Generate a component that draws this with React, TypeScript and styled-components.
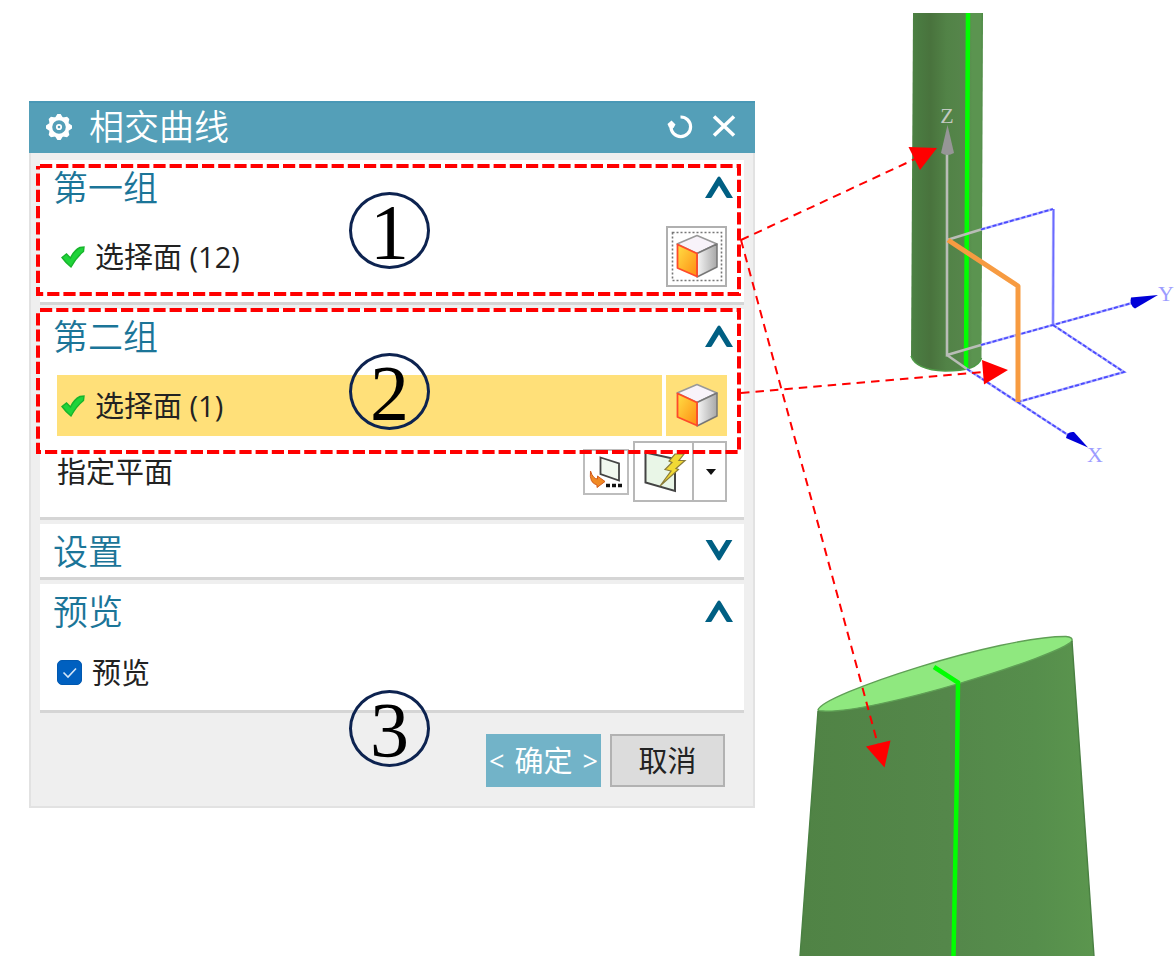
import React, { useState } from 'react';
import styled, { createGlobalStyle } from 'styled-components';

const GlobalStyle = createGlobalStyle`
  *, *::before, *::after { box-sizing: border-box; }
  body {
    margin: 0;
    background: #fff;
    color: #222;
    font-family: "Open Sans", "Noto Sans CJK SC", sans-serif;
  }
  button { font: inherit; color: inherit; padding: 0; border: 0; background: none; }
  svg { display: block; }
`;

const Page = styled.main`
  display: flex;
  align-items: flex-start;
  padding-left: 29px;
  overflow-x: hidden;
`;

const Dialog = styled.section`
  flex: 1;
  min-width: 0;
  margin-top: 101px;
`;

const TitleBar = styled.header`
  display: flex;
  align-items: center;
  height: 52px;
  padding: 0 18px 0 16px;
  background: #549fb8;
  box-shadow: inset 0 2px 0 #4998b6;
  color: #fff;
`;

const DialogTitle = styled.h1`
  flex: 1;
  margin: 0 0 0 16px;
  font-size: 35px;
  line-height: 48px;
  font-weight: 350;
`;

const BarButtons = styled.div`
  display: flex;
  gap: 18px;
`;

const BarButton = styled.button`
  width: 26px;
  height: 26px;
`;

const Body = styled.div`
  display: flex;
  flex-direction: column;
  gap: 4px;
  padding: 7px 9px 0;
  background: #efefef;
  border: 2px solid #e2e2e2;
  border-top: 0;
`;

const Panel = styled.section<{ $closed?: boolean }>`
  position: relative;
  padding: 0 17px ${(p) => (p.$closed ? 0 : 15)}px;
  background: #fff;
  border-bottom: 3px solid #d5d5d5;
`;

const PanelHead = styled.div`
  display: flex;
  align-items: center;
  justify-content: space-between;
  height: 53px;
  margin: 0 -6px 0 -4px;
`;

const PanelTitle = styled.h2`
  margin: 0;
  padding-top: 3px;
  color: #1b7598;
  font-size: 35px;
  line-height: 50px;
  font-weight: 350;
`;

const Row = styled.div<{ $gap: number; $height?: number }>`
  display: flex;
  align-items: center;
  gap: 4px;
  height: ${(p) => p.$height ?? 61}px;
  margin-top: ${(p) => p.$gap}px;
  font-size: 29px;
  line-height: 40px;
`;

const Field = styled.div<{ $active?: boolean }>`
  flex: 1;
  display: flex;
  align-items: center;
  gap: 10px;
  height: 100%;
  padding-left: 4px;
  background: ${(p) => (p.$active ? '#ffe079' : 'transparent')};
`;

const RowLabel = styled.span`
  flex: 1;
`;

const FaceButton = styled.button<{ $active?: boolean }>`
  width: 61px;
  height: 61px;
  background: ${(p) => (p.$active ? '#ffe079' : '#fff')};
  box-shadow: ${(p) => (p.$active ? 'none' : 'inset 0 0 0 2px #b0b0b0')};
`;

const ToolButton = styled.button`
  width: 46px;
  height: 46px;
  box-shadow: inset 0 0 0 2px #bdbdbd;
`;

const SplitButton = styled.div`
  display: flex;
  height: 61px;
  box-shadow: inset 0 0 0 2px #b8b8b8;
`;

const SplitMain = styled.button`
  width: 61px;
  border-right: 2px solid #b8b8b8;
`;

const SplitArrow = styled.button`
  display: flex;
  align-items: center;
  justify-content: center;
  width: 33px;
`;

const CheckLabel = styled.label`
  display: flex;
  align-items: center;
  gap: 10px;
`;

const CheckHolder = styled.span`
  position: relative;
  width: 25px;
  height: 25px;

  svg {
    position: absolute;
    inset: 0;
    pointer-events: none;
  }
`;

const CheckInput = styled.input`
  appearance: none;
  display: block;
  width: 25px;
  height: 25px;
  margin: 0;
  border: 1px solid #0058b0;
  border-radius: 5px;
  background: #fff;

  &:checked { background: #0060c0; }
`;

const Footer = styled.footer`
  display: flex;
  justify-content: flex-end;
  gap: 9px;
  padding: 17px 19px 19px 0;
`;

const ActionButton = styled.button<{ $primary?: boolean }>`
  width: 115px;
  height: 53px;
  font-size: 29px;
  line-height: 40px;
  white-space: nowrap;
  color: ${(p) => (p.$primary ? '#fff' : '#222')};
  background: ${(p) => (p.$primary ? '#72b3c8' : '#dcdcdc')};
  box-shadow: ${(p) => (p.$primary ? 'none' : 'inset 0 0 0 2px #b2b2b2')};
`;

const Arrowed = styled.span`
  display: flex;
  align-items: center;
  justify-content: space-between;
  padding: 0 3px;

  small { font-size: 27px; }
`;

const Outline = styled.svg<{ $top: number; $bottom: number }>`
  position: absolute;
  top: ${(p) => p.$top}px;
  left: -2px;
  width: calc(100% - 3px);
  height: calc(100% - ${(p) => p.$top + p.$bottom}px);
  overflow: visible;
  pointer-events: none;
`;

const StepMark = styled.div<{ $top: number }>`
  position: absolute;
  z-index: 2;
  top: ${(p) => p.$top}px;
  left: calc(50% - 43px);
  width: 81px;
  height: 77px;
  border: 3px solid #0d2350;
  border-radius: 50%;
  color: #000;
  font-family: "Liberation Serif", serif;
  font-size: 78px;
  line-height: 73px;
  text-align: center;
  pointer-events: none;
`;

const Scene = styled.svg`
  position: relative;
  flex: none;
  overflow: visible;
  pointer-events: none;
  font-family: "Liberation Serif", serif;
  font-size: 22px;
`;

const GearIcon = () => (
  <svg width="28" height="28" viewBox="-14 -14 28 28" fill="none" stroke="#fff">
    <circle r="8.6" strokeWidth="3.6" />
    <circle r="2.2" strokeWidth="1.8" />
    {[0, 45, 90, 135, 180, 225, 270, 315].map((a) => (
      <path key={a} d="M-4 -9.3 L-1.6 -13 H1.6 L4 -9.3Z" fill="#fff" stroke="none" transform={`rotate(${a})`} />
    ))}
  </svg>
);

const ResetIcon = () => (
  <svg width="26" height="26" viewBox="0 0 26 26" fill="none" stroke="#fff" strokeWidth="3.2">
    <path d="M13.5 3 A9.800 9.800 0 1 1 4 12.500" />
    <path d="M0.500 10 L4.500 6.500 L8.500 10.500 L6.500 14 L2 13.500Z" fill="#fff" stroke="none" />
  </svg>
);

const CloseIcon = () => (
  <svg width="26" height="26" viewBox="0 0 26 26" fill="none" stroke="#fff" strokeWidth="3.6">
    <path d="M3 2.500 L23 21.500 M23 2.500 L3 21.500" />
  </svg>
);

const Chevron = ({ down }: { down?: boolean }) => (
  <svg width="28" height="22" viewBox="0 0 28 22" fill="#005f83">
    <path
      d="M0 22 L12.500 1.500 Q14 -0.500 15.500 1.500 L28 22 H22.800 Q21.500 22 20.800 20.500 L14 9.500 L7.200 20.500 Q6.500 22 5.200 22Z"
      transform={down ? 'matrix(1 0 0 -1 0 21)' : undefined}
    />
  </svg>
);

const DoneIcon = () => (
  <svg width="24" height="24" viewBox="0 0 24 24">
    <path
      d="M1 12.500 L5.500 9 L9.500 13 Q13 5.500 19 2.500 L23 2 L22.500 6.500 Q15.500 12 10 22 Q5 18 1 12.500Z"
      fill="#1fd43a"
      stroke="#18b42c"
      strokeWidth="1.4"
    />
  </svg>
);

const CubeIcon = ({ focused }: { focused?: boolean }) => (
  <svg width="61" height="61" viewBox="0 0 61 61">
    <defs>
      <linearGradient id="cubeFront" x1="0" y1="0" x2="1" y2="1">
        <stop offset="0" stopColor="#ffdf45" />
        <stop offset="1" stopColor="#ff8c12" />
      </linearGradient>
      <linearGradient id="cubeSide" x1="0" y1="0" x2="1" y2="0">
        <stop offset="0" stopColor="#f6f6f6" />
        <stop offset="1" stopColor="#a8a8a8" />
      </linearGradient>
    </defs>
    {focused && (
      <rect x="6.5" y="6.5" width="49" height="48" fill="none" stroke="#777" strokeWidth="1.6" strokeDasharray="2 2" />
    )}
    <path d="M31 9.500 L51 18 L31 27.500 L11 18Z" fill="#f8f3fa" stroke="#999" strokeWidth="1.5" strokeLinejoin="round" />
    <path d="M31 27.500 L51 18 V41 L31 51Z" fill="url(#cubeSide)" stroke="#777" strokeWidth="1.5" strokeLinejoin="round" />
    <path d="M31 27.500 V50.500 L11.500 42 V18.500Z" fill="url(#cubeFront)" stroke="#ff4a2a" strokeWidth="1.8" strokeLinejoin="round" />
  </svg>
);

const PlaneDialogIcon = () => (
  <svg width="46" height="46" viewBox="0 0 46 46">
    <path d="M17.500 8.500 L36 14.500 V31.500 L17.500 25Z" fill="#f1f8ef" stroke="#444" strokeWidth="1.8" />
    <path d="M7.500 22 Q6 34 14 36 V38.500 L22 32.500 L14.500 27 V30 Q10 30 7.500 22Z" fill="#f08a24" stroke="#d35a1c" strokeWidth="1" />
    <path d="M23 36.500 h4 m2 0 h4 m2 0 h4" stroke="#111" strokeWidth="3.4" />
  </svg>
);

const InferredPlaneIcon = () => (
  <svg width="60" height="61" viewBox="0 0 60 61">
    <path d="M12.500 11.500 L42 18 V50 L12.500 41.500Z" fill="#e9f6e7" stroke="#444" strokeWidth="2" />
    <path
      d="M42 13 H51 L46 19.500 H52 L43 27.500 L45.500 28.500 L27 45 L38 30 L32 28.500 L39 21.500 L36 20Z"
      fill="#f1d935"
      stroke="#8a7c3a"
      strokeWidth="1.2"
    />
  </svg>
);

const RedOutline = ({ top, bottom }: { top: number; bottom: number }) => (
  <Outline $top={top} $bottom={bottom} aria-hidden="true">
    <rect width="100%" height="100%" fill="none" stroke="#f00" strokeWidth="4" strokeDasharray="12.2 4" strokeDashoffset="-2" />
  </Outline>
);

type GroupProps = { title: string; closed?: boolean; children?: React.ReactNode };

const Group = ({ title, closed, children }: GroupProps) => (
  <Panel $closed={closed}>
    <PanelHead>
      <PanelTitle>{title}</PanelTitle>
      <button type="button" aria-label={title} aria-expanded={!closed}>
        <Chevron down={closed} />
      </button>
    </PanelHead>
    {children}
  </Panel>
);

const SelectRow = ({ label, active }: { label: string; active?: boolean }) => (
  <Row $gap={13}>
    <Field $active={active}>
      <DoneIcon />
      <span>{label}</span>
    </Field>
    <FaceButton type="button" aria-label={label} $active={active}>
      <CubeIcon focused={!active} />
    </FaceButton>
  </Row>
);

const ModelScene = () => (
  <Scene width="419" height="956" viewBox="755 0 419 956" role="img" aria-label="模型">
    <defs>
      <linearGradient id="rod" x1="0" y1="0" x2="1" y2="0">
        <stop offset="0" stopColor="#4c8243" />
        <stop offset="0.1" stopColor="#4a7b41" />
        <stop offset="0.27" stopColor="#49733d" />
        <stop offset="0.5" stopColor="#528347" />
        <stop offset="0.75" stopColor="#56854b" />
        <stop offset="0.85" stopColor="#5b9450" />
        <stop offset="0.97" stopColor="#5b9450" />
        <stop offset="1" stopColor="#4a8842" />
      </linearGradient>
      <linearGradient id="blade" x1="0" y1="0" x2="1" y2="0">
        <stop offset="0" stopColor="#508345" />
        <stop offset="0.5" stopColor="#54874a" />
        <stop offset="0.8" stopColor="#568e4c" />
        <stop offset="1" stopColor="#5b964e" />
      </linearGradient>
    </defs>

    <path d="M913 13 H983 L981.5 358 Q978 371 945 371 Q916 370 911 356Z" fill="url(#rod)" />
    <path d="M911 356 Q916 370 945 371 Q978 371 981.5 358" fill="none" stroke="#4f9a47" strokeWidth="1.5" />
    <path d="M968 13 L966 369" stroke="#0f0" strokeWidth="4.5" />

    <g fill="none" stroke="#b9bdb7" strokeWidth="2.6">
      <path d="M947 152 V355 L981 345" />
      <path d="M947 355 L967 369" />
      <path d="M947 240 L981 229.500" />
    </g>
    <path d="M947.500 125 L954 153 Q947 157 941 153Z" fill="#969696" />
    <g fill="none" stroke="#b4b4ff" strokeWidth="2.6">
      <path d="M981 229.500 L1053 209" />
      <path d="M1053.500 209 L1053 325" strokeWidth="3" />
      <path d="M981 345 L1132 303" />
      <path d="M967 369 L1068 435" />
      <path d="M1053 325 L1124 372 L1018 402" />
    </g>
    <g fill="none" stroke="#4a4aff" strokeWidth="1.8" strokeDasharray="4 2">
      <path d="M981 229.500 L1053 209" />
      <path d="M981 345 L1132 303" />
      <path d="M967 369 L1068 435" />
      <path d="M1053 325 L1124 372 L1018 402" />
    </g>
    <path d="M1053.500 209 L1053 325" stroke="#6a6aff" strokeWidth="1.4" />
    <path d="M1131 297.500 L1158 295 L1135 308.500 Q1129 305 1131 297.500Z" fill="#0000d8" />
    <path d="M1066 438 Q1067 431 1074 432 L1088 447.500Z" fill="#0000d8" />
    <path d="M948 240 L1018 286 V402" fill="none" stroke="#f79b41" strokeWidth="5" strokeLinejoin="round" />
    <g textAnchor="middle">
      <text x="947" y="123" fill="#c3c9c1">Z</text>
      <text x="1166" y="301" fill="#9c9cff">Y</text>
      <text x="1095" y="462" fill="#9c9cff">X</text>
    </g>

    <path d="M818 710 Q900 711 1072 640 L1094 956 H800Z" fill="url(#blade)" />
    <path
      d="M818 710 C822 694 1000 636 1066 636.500 Q1073 637 1072 641 C1060 656 870 715 823 711 Q818 711 818 710Z"
      fill="#8fe87f"
      stroke="#5f9f55"
      strokeWidth="1.4"
    />
    <path d="M818 711 L800 956 M1072 641 L1094 956" stroke="#4a8042" strokeWidth="1.4" />
    <path d="M934 667 L958 682.500 L957 770 L953.500 956" fill="none" stroke="#0f0" strokeWidth="4.5" />

    <g fill="none" stroke="#f00" strokeWidth="2" strokeDasharray="8.5 6">
      <path d="M741 240 L915 159" />
      <path d="M741 240 L878 745" />
      <path d="M741 393 L984 372" />
    </g>
    <path d="M908.500 147 L937 148 L920 170Z M866 746.500 L890.500 740.500 L884.500 767.500Z M982 360 L1008 370 L984 384.500Z" fill="#f00" />
  </Scene>
);

export default function App() {
  const [preview, setPreview] = useState(true);

  return (
    <>
      <GlobalStyle />
      <Page>
        <Dialog aria-label="相交曲线">
          <TitleBar>
            <GearIcon />
            <DialogTitle>相交曲线</DialogTitle>
            <BarButtons>
              <BarButton type="button" aria-label="重置"><ResetIcon /></BarButton>
              <BarButton type="button" aria-label="关闭"><CloseIcon /></BarButton>
            </BarButtons>
          </TitleBar>
          <Body>
            <Group title="第一组">
              <SelectRow label="选择面 (12)" />
              <RedOutline top={6} bottom={8} />
              <StepMark $top={32}>1</StepMark>
            </Group>

            <Group title="第二组">
              <SelectRow label="选择面 (1)" active />
              <Row $gap={5}>
                <RowLabel>指定平面</RowLabel>
                <ToolButton type="button" aria-label="平面对话框"><PlaneDialogIcon /></ToolButton>
                <SplitButton>
                  <SplitMain type="button" aria-label="自动判断"><InferredPlaneIcon /></SplitMain>
                  <SplitArrow type="button" aria-label="更多平面类型" aria-haspopup="menu">
                    <svg width="10" height="6" viewBox="0 0 10 6"><path d="M0 0 H10 L5 6Z" fill="#111" /></svg>
                  </SplitArrow>
                </SplitButton>
              </Row>
              <RedOutline top={1} bottom={65} />
              <StepMark $top={44}>2</StepMark>
            </Group>

            <Group title="设置" closed />

            <Group title="预览">
              <Row $gap={13} $height={45}>
                <CheckLabel>
                  <CheckHolder>
                    <CheckInput type="checkbox" checked={preview} onChange={(e) => setPreview(e.target.checked)} />
                    <svg width="25" height="25" viewBox="0 0 25 25" fill="none" stroke="#d4e6f8" strokeWidth="1.6">
                      <path d="M6.500 12.500 L11 17 L19 8.500" />
                    </svg>
                  </CheckHolder>
                  预览
                </CheckLabel>
              </Row>
              <StepMark $top={106}>3</StepMark>
            </Group>

            <Footer>
              <ActionButton type="button" $primary>
                <Arrowed><small>&lt;</small>确定<small>&gt;</small></Arrowed>
              </ActionButton>
              <ActionButton type="button">取消</ActionButton>
            </Footer>
          </Body>
        </Dialog>
        <ModelScene />
      </Page>
    </>
  );
}
